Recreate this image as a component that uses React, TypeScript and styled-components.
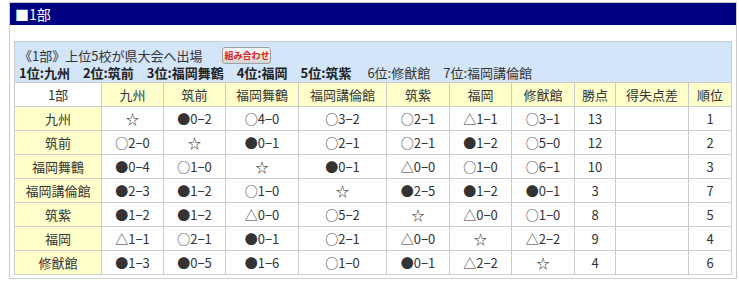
import styled, { createGlobalStyle } from "styled-components"

const GlobalStyle = createGlobalStyle`
    body {
        margin: 0;
        background: #fff;
        font-family: "Noto Sans CJK JP", "Noto Sans", sans-serif;
        color: #333;
    }
`

const Panel = styled.section`
    box-sizing: border-box;
    width: 728px;
    margin: 2px 0 0 9px;
    border: 1px solid #ccc;
    padding-bottom: 3px;
`

const Title = styled.h2`
    margin: 0;
    height: 22px;
    line-height: 22px;
    padding-left: 5px;
    background: #000080;
    color: #fff;
    font-size: 14px;
    font-weight: normal;
`

const Body = styled.div`
    padding: 16px 4px 0;
`

const Table = styled.table`
    width: 717px;
    border-collapse: collapse;
    table-layout: fixed;
    font-size: 13px;
`

const Col = styled.col<{ $w: number }>`
    width: ${p => p.$w}px;
`

const CaptionCell = styled.td`
    height: 41px;
    box-sizing: border-box;
    background: #d3e5f9;
    border: 1px solid #ccc;
    padding: 3px 4px 2px;
    text-align: left;
    line-height: 15px;
    vertical-align: top;
`

const CaptionLine = styled.div`
    display: flex;
    align-items: center;
    gap: 20px;
    height: 20px;
`

const Ranking = styled.div`
    white-space: pre;
    line-height: 15px;
`

const Bold = styled.b`
    font-weight: bold;
    color: #222;
`

const MatchButton = styled.button`
    box-sizing: border-box;
    width: 49px;
    height: 17px;
    padding: 0;
    border: 1px solid #a0a0a0;
    border-radius: 3px;
    background: linear-gradient(#fdfdfd, #d4d4d4);
    color: #d22;
    font-family: inherit;
    font-size: 9px;
    font-weight: bold;
    line-height: 15px;
    white-space: nowrap;
`

const Cell = styled.td<{ $bg?: string }>`
    height: 23px;
    padding: 0;
    border: 1px solid #ccc;
    text-align: center;
    background: ${p => p.$bg ?? "#fff"};
    white-space: nowrap;
    overflow: hidden;
`

const YELLOW = "#ffffcc"

const teams = ["九州", "筑前", "福岡舞鶴", "福岡講倫館", "筑紫", "福岡", "修猷館"]
const widths = [87, 62, 62, 73, 88, 63, 62, 63, 41, 73, 43]

const results: string[][] = [
    ["☆", "●0−2", "○4−0", "○3−2", "○2−1", "△1−1", "○3−1", "13", "", "1"],
    ["○2−0", "☆", "●0−1", "○2−1", "○2−1", "●1−2", "○5−0", "12", "", "2"],
    ["●0−4", "○1−0", "☆", "●0−1", "△0−0", "○1−0", "○6−1", "10", "", "3"],
    ["●2−3", "●1−2", "○1−0", "☆", "●2−5", "●1−2", "●0−1", "3", "", "7"],
    ["●1−2", "●1−2", "△0−0", "○5−2", "☆", "△0−0", "○1−0", "8", "", "5"],
    ["△1−1", "○2−1", "●0−1", "○2−1", "△0−0", "☆", "△2−2", "9", "", "4"],
    ["●1−3", "●0−5", "●1−6", "○1−0", "●0−1", "△2−2", "☆", "4", "", "6"],
]

const headers = ["1部", ...teams, "勝点", "得失点差", "順位"]

export default function App() {
    return (
        <>
            <GlobalStyle />
            <Panel>
                <Title>■1部</Title>
                <Body>
                    <Table>
                        <colgroup>
                            {widths.map((w, i) => <Col key={i} $w={w} />)}
                        </colgroup>
                        <tbody>
                            <tr>
                                <CaptionCell colSpan={11}>
                                    <CaptionLine>
                                        <span>《1部》上位5校が県大会へ出場</span>
                                        <MatchButton>組み合わせ</MatchButton>
                                    </CaptionLine>
                                    <Ranking>
                                        <Bold>{"1位:九州　2位:筑前　3位:福岡舞鶴　4位:福岡　5位:筑紫"}</Bold>
                                        {"　 6位:修猷館　7位:福岡講倫館"}
                                    </Ranking>
                                </CaptionCell>
                            </tr>
                            <tr>
                                {headers.map((h, i) => (
                                    <Cell key={h} $bg={i === 0 ? "#fff" : YELLOW}>{h}</Cell>
                                ))}
                            </tr>
                            {teams.map((t, r) => (
                                <tr key={t}>
                                    <Cell $bg={YELLOW}>{t}</Cell>
                                    {results[r].map((v, c) => (
                                        <Cell key={c}>{v}</Cell>
                                    ))}
                                </tr>
                            ))}
                        </tbody>
                    </Table>
                </Body>
            </Panel>
        </>
    )
}
